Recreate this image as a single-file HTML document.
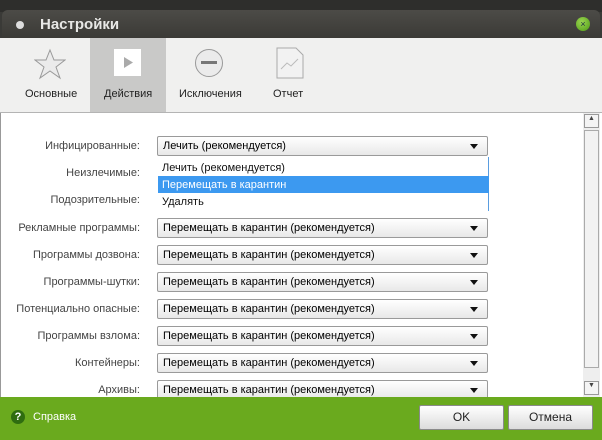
<html><head><style>
body{margin:0;width:602px;height:440px;overflow:hidden;font-family:"Liberation Sans",sans-serif;font-size:11px;background:#3a3a37;position:relative}
.a{position:absolute}
.lbl{position:absolute;right:462px;color:#444;text-align:right;white-space:nowrap}
.dd{position:absolute;left:157px;border:1px solid #9a9a9a;border-radius:2px;background:linear-gradient(#fff,#e8e8e8);line-height:19px;padding-left:5px;box-sizing:border-box;width:331px;height:20px}
.dd:after{content:"";position:absolute;right:9px;top:7px;border-left:4px solid transparent;border-right:4px solid transparent;border-top:5px solid #111}
.btn{position:absolute;top:405px;width:83px;height:23px;border:1px solid #8a8a8a;border-radius:2px;background:linear-gradient(#fff,#dcdcdc);text-align:center;line-height:23px;font-size:12px;color:#222}
</style></head><body>
<div class="a" style="left:0;top:0;width:602px;height:12px;background:#2e2e2c"></div>
<div class="a" style="left:2px;top:10px;width:598px;height:30px;background:linear-gradient(#4c4b47,#3a3935);border-radius:6px 6px 0 0"></div>
<div class="a" style="left:16px;top:21px;width:8px;height:8px;border-radius:50%;background:#ddd"></div>
<div class="a" style="left:40px;top:16px;color:#e8e8e6;font-size:15px;font-weight:bold">Настройки</div>
<div class="a" style="left:576px;top:17px;width:14px;height:14px;border-radius:50%;background:radial-gradient(circle at 40% 35%,#9bd651,#4f9a16);color:#234;font-size:9px;text-align:center;line-height:14px">×</div>
<div class="a" style="left:0;top:38px;width:602px;height:74px;background:#f0f0ef;border-bottom:1px solid #b4b4b4"></div>
<div class="a" style="left:90px;top:38px;width:76px;height:74px;background:#c9c9c8"></div>
<svg class="a" style="left:34px;top:48px" width="32" height="32"><polygon points="16,2 20,12 31,12 22,19 26,30 16,23 6,30 10,19 1,12 12,12" fill="#ebebeb" stroke="#999"/></svg>
<div class="a" style="left:114px;top:49px;width:27px;height:27px;background:#fff"></div>
<svg class="a" style="left:114px;top:49px" width="27" height="27"><polygon points="10,8 19,13.5 10,19" fill="#aaa"/></svg>
<div class="a" style="left:195px;top:49px;width:26px;height:26px;border-radius:50%;border:1px solid #999;background:#ebebeb"></div>
<div class="a" style="left:201px;top:61px;width:16px;height:3px;background:#777"></div>
<svg class="a" style="left:276px;top:47px" width="28" height="32"><path d="M1 1H20L27 8V31H1Z" fill="#f2f2f2" stroke="#aaa"/><path d="M5 22L11 16L15 19L22 12" fill="none" stroke="#bbb"/></svg>
<div class="a" style="left:25px;top:88px;color:#222">Основные</div>
<div class="a" style="left:104px;top:88px;color:#222">Действия</div>
<div class="a" style="left:179px;top:88px;color:#222">Исключения</div>
<div class="a" style="left:273px;top:88px;color:#222">Отчет</div>
<div class="a" style="left:0;top:113px;width:602px;height:284px;background:#fff;border-left:1px solid #999"></div>
<div class="a" style="left:583px;top:113px;width:17px;height:284px;background:#eee"></div>
<div class="a" style="left:584px;top:114px;width:15px;height:14px;border:1px solid #999;box-sizing:border-box;background:#f4f4f4;font-size:7px;text-align:center;color:#444">▲</div>
<div class="a" style="left:584px;top:130px;width:15px;height:238px;border:1px solid #aaa;box-sizing:border-box;background:#f2f2f2"></div>
<div class="a" style="left:584px;top:381px;width:15px;height:14px;border:1px solid #999;box-sizing:border-box;background:#f4f4f4;font-size:7px;text-align:center;color:#444">▼</div>
<div class="lbl" style="top:140px">Инфицированные:</div>
<div class="lbl" style="top:167px">Неизлечимые:</div>
<div class="lbl" style="top:194px">Подозрительные:</div>
<div class="lbl" style="top:222px">Рекламные программы:</div>
<div class="lbl" style="top:249px">Программы дозвона:</div>
<div class="lbl" style="top:276px">Программы-шутки:</div>
<div class="lbl" style="top:303px">Потенциально опасные:</div>
<div class="lbl" style="top:330px">Программы взлома:</div>
<div class="lbl" style="top:357px">Контейнеры:</div>
<div class="lbl" style="top:384px">Архивы:</div>
<div class="dd" style="top:136px">Лечить (рекомендуется)</div>
<div class="a" style="left:157px;top:157px;width:331px;height:54px;background:#fff;border-right:1px solid #5a9de0"></div>
<div class="a" style="left:162px;top:162px;color:#111">Лечить (рекомендуется)</div>
<div class="a" style="left:158px;top:176px;width:331px;height:17px;background:#3c99f0"></div>
<div class="a" style="left:162px;top:179px;color:#fff">Перемещать в карантин</div>
<div class="a" style="left:162px;top:196px;color:#111">Удалять</div>
<div class="dd" style="top:218px">Перемещать в карантин (рекомендуется)</div>
<div class="dd" style="top:245px">Перемещать в карантин (рекомендуется)</div>
<div class="dd" style="top:272px">Перемещать в карантин (рекомендуется)</div>
<div class="dd" style="top:299px">Перемещать в карантин (рекомендуется)</div>
<div class="dd" style="top:326px">Перемещать в карантин (рекомендуется)</div>
<div class="dd" style="top:353px">Перемещать в карантин (рекомендуется)</div>
<div class="dd" style="top:380px">Перемещать в карантин (рекомендуется)</div>
<div class="a" style="left:0;top:397px;width:602px;height:43px;background:#6aaa1e"></div>
<div class="a" style="left:11px;top:410px;width:14px;height:14px;border-radius:50%;background:#2f6d10;color:#fff;font-weight:bold;font-size:11px;text-align:center;line-height:14px">?</div>
<div class="a" style="left:33px;top:411px;color:#fff">Справка</div>
<div class="btn" style="left:419px">OK</div>
<div class="btn" style="left:508px">Отмена</div>
</body></html>
